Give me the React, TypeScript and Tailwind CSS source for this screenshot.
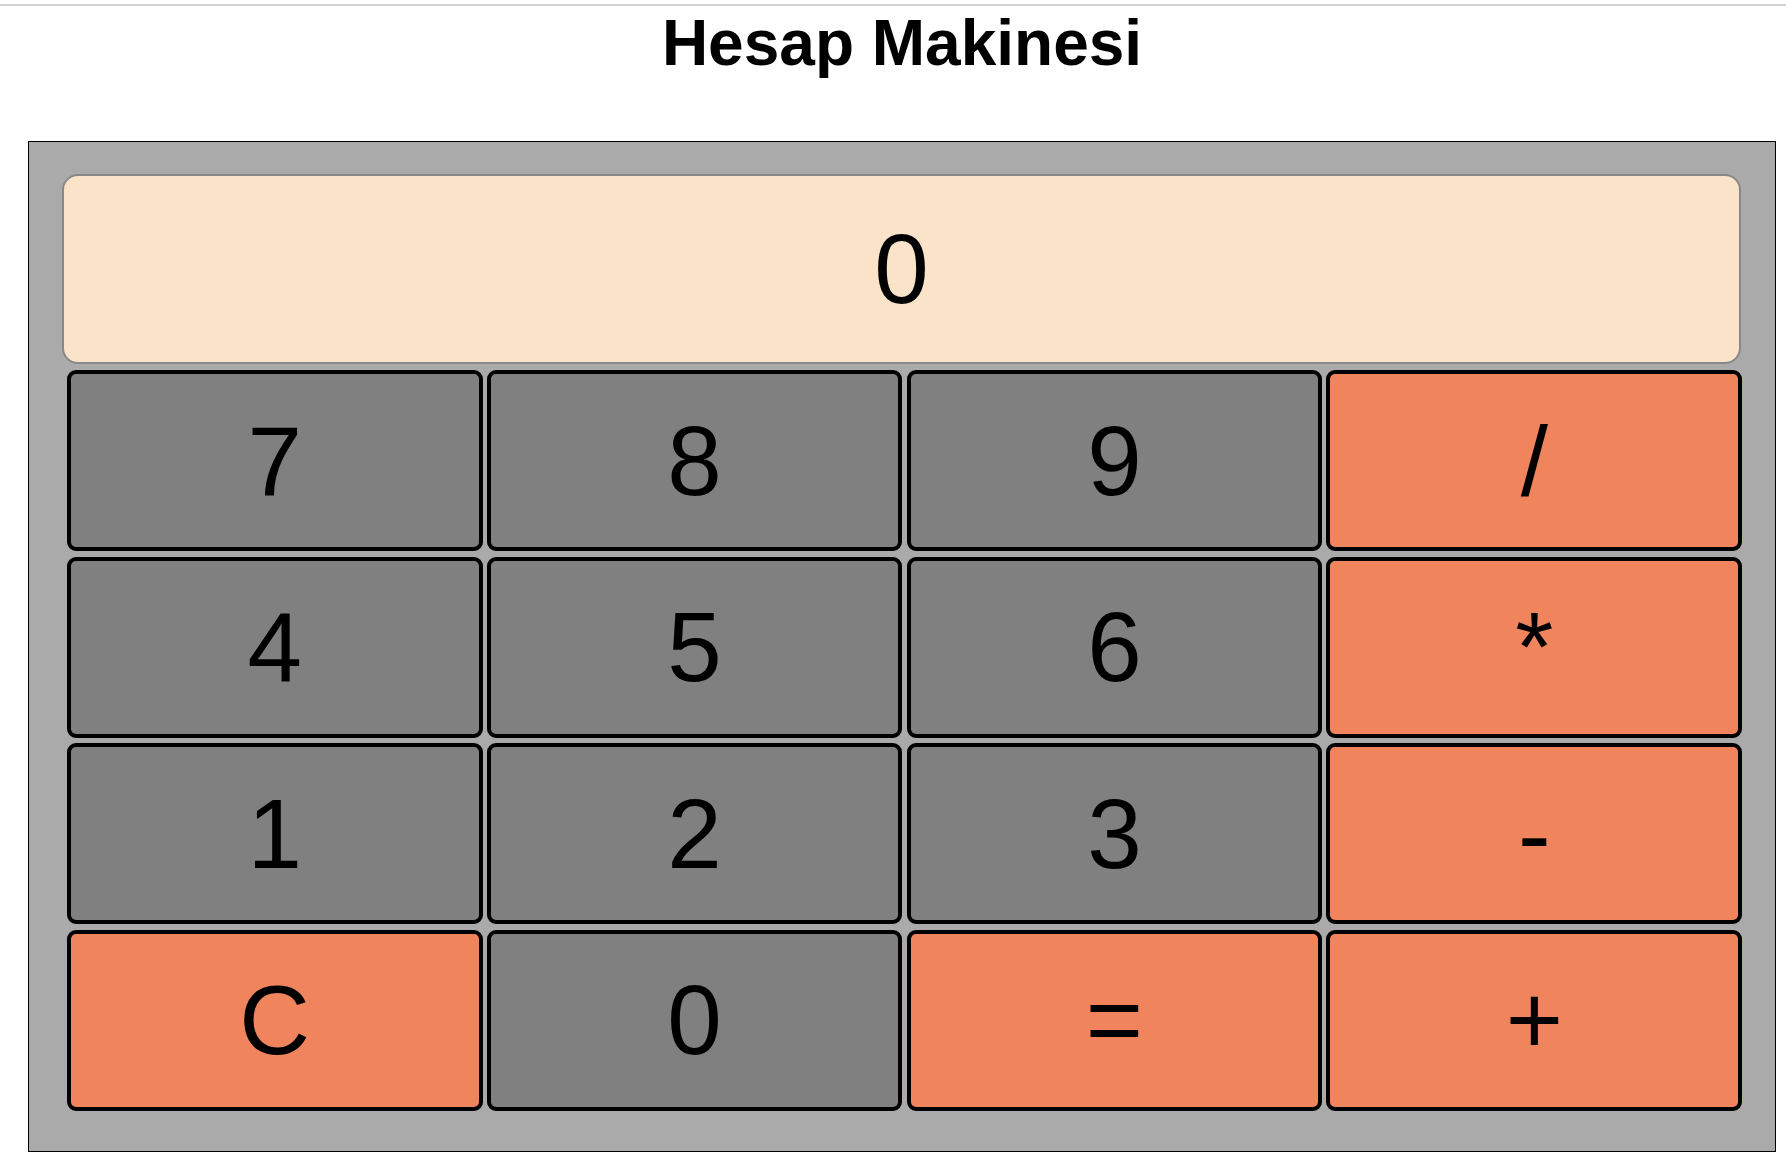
import { useState } from "react";

const keys = [
  { label: "7", op: false },
  { label: "8", op: false },
  { label: "9", op: false },
  { label: "/", op: true },
  { label: "4", op: false },
  { label: "5", op: false },
  { label: "6", op: false },
  { label: "*", op: true },
  { label: "1", op: false },
  { label: "2", op: false },
  { label: "3", op: false },
  { label: "-", op: true },
  { label: "C", op: true },
  { label: "0", op: false },
  { label: "=", op: true },
  { label: "+", op: true },
];

export default function App() {
  const [display, setDisplay] = useState("0");

  const press = (key: string) => {
    if (key === "C") {
      setDisplay("0");
      return;
    }
    if (key === "=") {
      try {
        // eslint-disable-next-line no-new-func
        const result = Function(`"use strict"; return (${display})`)();
        setDisplay(String(result));
      } catch {
        setDisplay("Hata");
      }
      return;
    }
    setDisplay((d) => (d === "0" || d === "Hata" ? key : d + key));
  };

  return (
    <div className="min-h-screen bg-white font-['Liberation_Sans',Arial,sans-serif] text-black">
      <div className="pt-[4px]">
        <div className="h-[2px] bg-[#d3d3d3]" />
      </div>

      <div className="ml-[28px] w-[1748px]">
        <h1 className="mt-[1px] text-center text-[64px] font-bold leading-[72px]">
          Hesap Makinesi
        </h1>

        <div className="mt-[62px] border border-black bg-[#aaaaaa] pl-[33px] pt-[32px] pb-[40px]">
          {/* Display */}
          <div className="flex h-[190px] w-[1679px] items-center justify-center rounded-[16px] border-2 border-[#888888] bg-[#fae3c8] text-[98px] leading-none">
            {display}
          </div>

          {/* Keys */}
          <div className="ml-[5px] mt-[6px] grid w-[1675px] grid-cols-4 gap-x-[4.33px] gap-y-[5.67px]">
            {keys.map((k) => (
              <button
                key={k.label}
                onClick={() => press(k.label)}
                className={
                  k.op
                    ? "flex h-[181px] cursor-pointer items-center justify-center rounded-[9px] border-4 border-black bg-[#f0845c] text-[98px] leading-none"
                    : "flex h-[181px] cursor-pointer items-center justify-center rounded-[9px] border-4 border-black bg-[#808080] text-[98px] leading-none"
                }
              >
                {k.label}
              </button>
            ))}
          </div>
        </div>
      </div>
    </div>
  );
}
